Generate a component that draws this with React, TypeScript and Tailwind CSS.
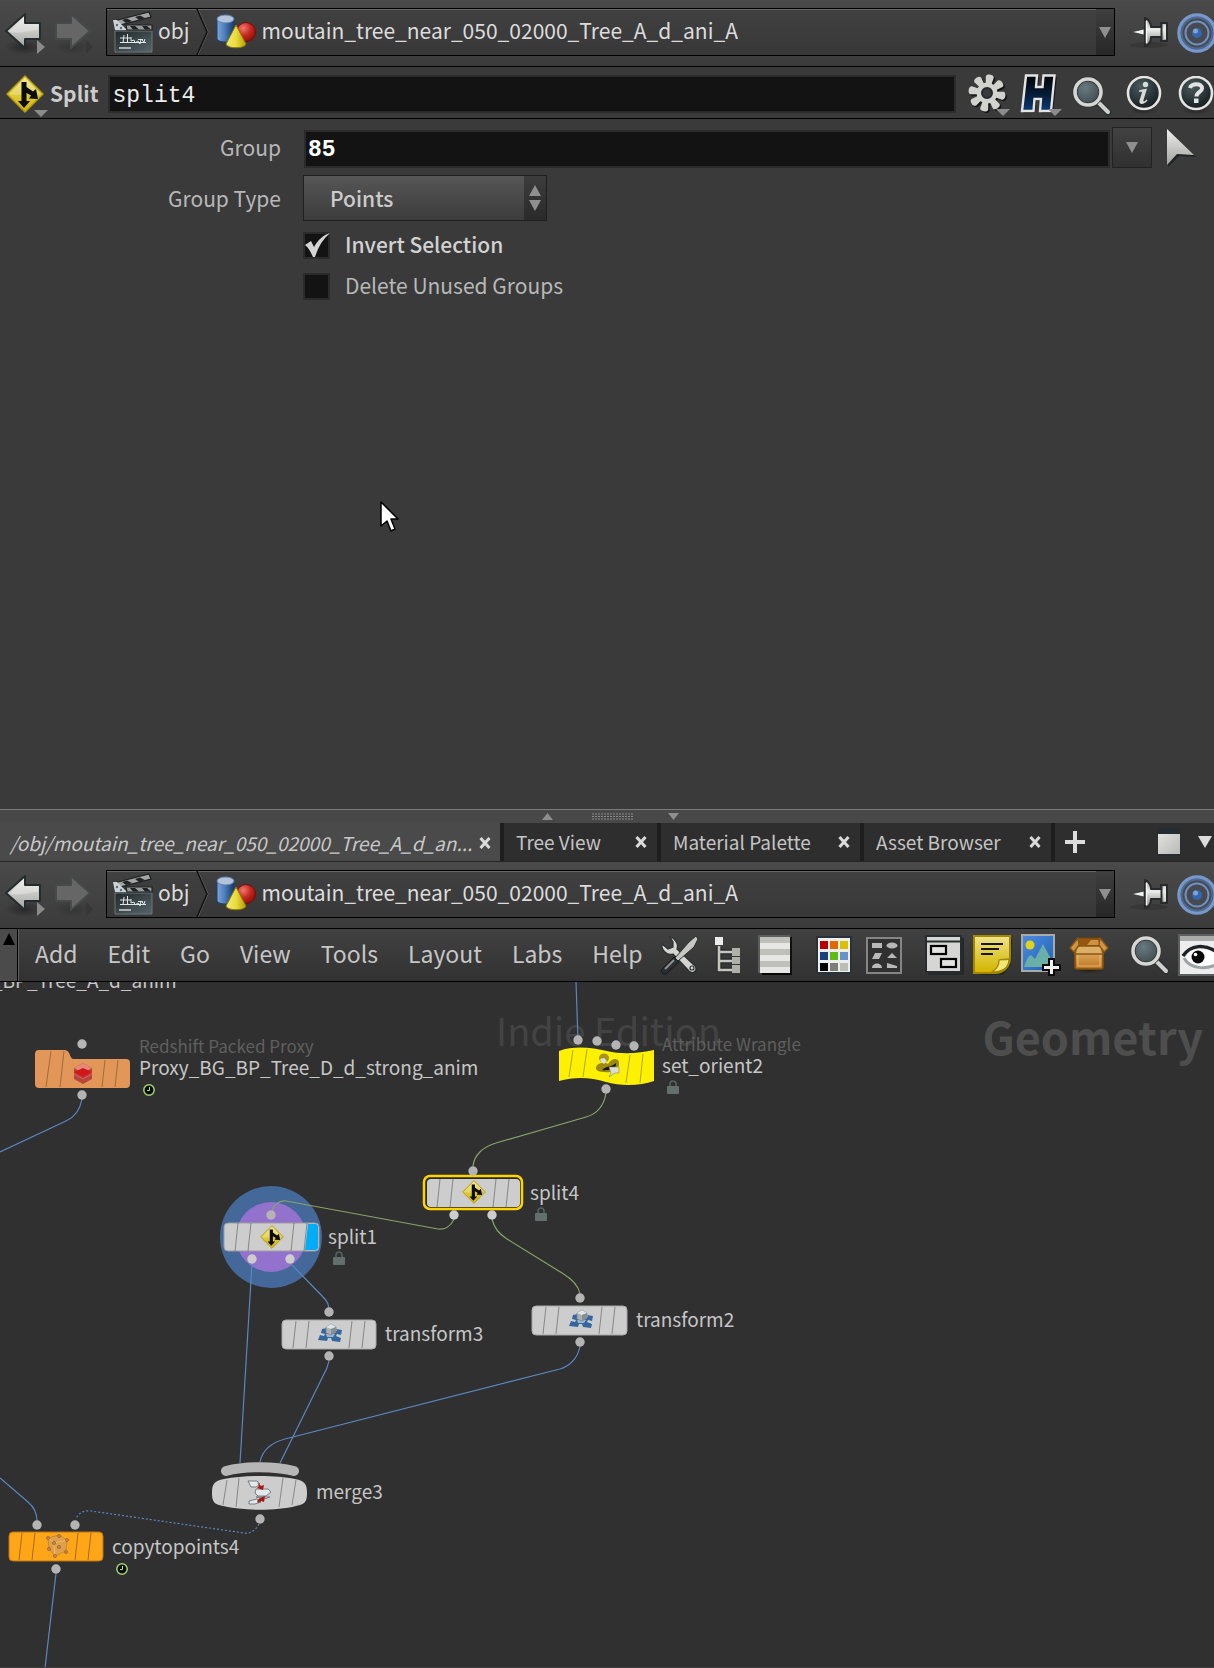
import React from "react";

const sans = "font-['Noto_Sans_CJK_SC','Open_Sans',sans-serif]";
const mono = "font-['Liberation_Mono',monospace]";

/* ---------- shared gradients ---------- */

function Gradients() {
  return (
    <svg className="absolute h-0 w-0" aria-hidden="true">
      <defs>
        <linearGradient id="silver" x1="0" y1="0" x2="0" y2="1">
          <stop offset="0" stopColor="#f0f0ee" />
          <stop offset="1" stopColor="#a2a39f" />
        </linearGradient>
        <linearGradient id="pinBody" x1="0" y1="0" x2="0" y2="1">
          <stop offset="0" stopColor="#8e908e" />
          <stop offset="0.4" stopColor="#ededeb" />
          <stop offset="1" stopColor="#7d7f7d" />
        </linearGradient>
        <linearGradient id="gold" x1="0" y1="0" x2="0" y2="1">
          <stop offset="0" stopColor="#efe48c" />
          <stop offset="0.5" stopColor="#dfcb3d" />
          <stop offset="1" stopColor="#d3b400" />
        </linearGradient>
        <linearGradient id="slate" x1="0" y1="0" x2="1" y2="1">
          <stop offset="0" stopColor="#20282b" />
          <stop offset="1" stopColor="#56656a" />
        </linearGradient>
        <linearGradient id="cyl" x1="0" y1="0" x2="1" y2="0">
          <stop offset="0" stopColor="#7ea6d6" />
          <stop offset="0.45" stopColor="#4d7ebd" />
          <stop offset="1" stopColor="#173866" />
        </linearGradient>
        <radialGradient id="redBall" cx="0.35" cy="0.3" r="0.8">
          <stop offset="0" stopColor="#ef7a6c" />
          <stop offset="0.5" stopColor="#c4281f" />
          <stop offset="1" stopColor="#8a0a06" />
        </radialGradient>
        <linearGradient id="cone" x1="0" y1="0" x2="1" y2="0">
          <stop offset="0" stopColor="#f3ea7a" />
          <stop offset="0.5" stopColor="#eadc3c" />
          <stop offset="1" stopColor="#b59f08" />
        </linearGradient>
        <linearGradient id="navy" x1="0" y1="0" x2="0" y2="1">
          <stop offset="0" stopColor="#010408" />
          <stop offset="0.5" stopColor="#051a33" />
          <stop offset="1" stopColor="#0c3a78" />
        </linearGradient>
        <radialGradient id="glass" cx="0.4" cy="0.35" r="0.8">
          <stop offset="0" stopColor="#687a80" />
          <stop offset="1" stopColor="#374246" />
        </radialGradient>
        <radialGradient id="badge" cx="0.4" cy="0.3" r="0.8">
          <stop offset="0" stopColor="#4a5a5e" />
          <stop offset="1" stopColor="#0f1618" />
        </radialGradient>
        <linearGradient id="sky" x1="0" y1="0" x2="1" y2="1">
          <stop offset="0" stopColor="#4d8be0" />
          <stop offset="1" stopColor="#1f62b4" />
        </linearGradient>
        <linearGradient id="carton" x1="0" y1="0" x2="0" y2="1">
          <stop offset="0" stopColor="#e0ac62" />
          <stop offset="1" stopColor="#b87420" />
        </linearGradient>
        <linearGradient id="window" x1="0" y1="0" x2="1" y2="1">
          <stop offset="0" stopColor="#e2e3e1" />
          <stop offset="1" stopColor="#b9bab6" />
        </linearGradient>
        <radialGradient id="shade">
          <stop offset="0" stopColor="#000" stopOpacity="0.35" />
          <stop offset="1" stopColor="#000" stopOpacity="0" />
        </radialGradient>
      </defs>
    </svg>
  );
}

/* ---------- toolbar icons ---------- */

function BackIcon() {
  return (
    <svg width="42" height="44" viewBox="0 0 42 44" aria-hidden="true">
      <ellipse cx="20" cy="35" rx="20" ry="8" fill="url(#shade)" />
      <path d="M2 19 21 2V11H36V27H21V36Z" fill="url(#silver)" stroke="#252c2e" strokeWidth="2" strokeLinejoin="round" />
      <path d="M5 20 20 5V12H34V18C24 18 20 22 5 20Z" fill="#f2f2ef" opacity="0.4" />
      <path d="M33 28 41 35 33 42Z" fill="#8b8b8b" />
    </svg>
  );
}

function ForwardIcon() {
  return (
    <svg width="40" height="44" viewBox="0 0 40 44" aria-hidden="true">
      <ellipse cx="18" cy="35" rx="18" ry="8" fill="url(#shade)" opacity="0.5" />
      <path d="M36 19 17 2V11H2V27H17V36Z" fill="#666" stroke="#464a4a" strokeWidth="2" strokeLinejoin="round" />
      <path d="M32 28 39 35 32 42Z" fill="#363636" />
    </svg>
  );
}

function ClapperIcon() {
  return (
    <svg width="40" height="42" viewBox="0 0 40 42" aria-hidden="true">
      <path d="M1 10 36 1 38 6 3 15Z" fill="#a3a6a5" stroke="#1c2021" strokeWidth="1.200" />
      <path d="M9 9 14 7.500 19 10 13 12ZM22 6 27 4.500 32 7 26 9Z" fill="#202425" />
      <path d="M2 20H39V41H2Z" fill="url(#slate)" stroke="#6c777a" strokeWidth="1" />
      <path d="M0 9H4L14 19H2Z" fill="#c9d3d8" />
      <circle cx="4" cy="14" r="1.200" fill="#5f6b70" />
      <circle cx="8" cy="17" r="1.200" fill="#5f6b70" />
      <path d="M13 14H39V19H14Z" fill="#979b9a" stroke="#1c2021" strokeWidth="1.200" />
      <path d="M17 15H22L26 18.500H20ZM29 15H34L38 18.500H32Z" fill="#1c2021" />
      <path d="M7 27H18M7 31.500H33M11 24 10 32M14.500 23V32M18 26V30L21 29 22 32 25 30 27 33 28 28 31 31 32 28M25 28.500H30" stroke="#dfe4e4" strokeWidth="1" fill="none" />
      <path d="M6 37H18" stroke="#a9aeae" strokeWidth="2" />
    </svg>
  );
}

function ShapesIcon() {
  return (
    <svg width="42" height="36" viewBox="0 0 42 36" aria-hidden="true">
      <path d="M1 5V25C2 29 17 29 18 25V5Z" fill="url(#cyl)" stroke="#1d3f72" strokeWidth="1" />
      <ellipse cx="9.500" cy="5" rx="8.500" ry="4" fill="#b3c3d8" stroke="#5d83b6" />
      <circle cx="30" cy="18" r="9.500" fill="url(#redBall)" stroke="#7b0b06" />
      <path d="M20 11 30 30C29 35 11 35 10 30Z" fill="url(#cone)" stroke="#8a7808" strokeWidth="1" strokeLinejoin="round" />
    </svg>
  );
}

function PinIcon() {
  return (
    <svg width="40" height="34" viewBox="0 0 40 34" aria-hidden="true">
      <ellipse cx="20" cy="29" rx="19" ry="3" fill="#333" opacity="0.7" />
      <path d="M2 16 15 13V19Z" fill="#f2f2f0" stroke="#2d3233" strokeWidth="0.800" />
      <path d="M16 2C20 3 22 8 22 11H32V7H38V25H32V21H22C22 25 20 29 16 30Z" fill="url(#pinBody)" stroke="#252a2b" strokeWidth="2" strokeLinejoin="round" />
      <path d="M17.500 5V27" stroke="#f6f6f4" strokeWidth="1.500" />
      <path d="M32.500 8V24" stroke="#2a2f30" strokeWidth="2" />
      <path d="M36 9V23" stroke="#e8e8e6" strokeWidth="1.500" />
    </svg>
  );
}

function TargetIcon() {
  return (
    <svg width="40" height="40" viewBox="0 0 40 40" aria-hidden="true">
      <circle cx="20" cy="20" r="18" fill="#474b50" stroke="#7698ca" strokeWidth="3.500" />
      <circle cx="20" cy="20" r="15.500" fill="none" stroke="#4d6a92" strokeWidth="2" />
      <circle cx="20" cy="20" r="11.500" fill="none" stroke="#6f90c2" strokeWidth="2" />
      <circle cx="20" cy="20" r="5" fill="#3566ae" />
      <circle cx="18.500" cy="18" r="2.500" fill="#7fa3d8" />
    </svg>
  );
}

function SplitGlyph() {
  return (
    <g>
      <path d="M19 1 37 19 19 37 1 19Z" fill="url(#gold)" stroke="#b59a10" strokeWidth="1.500" strokeLinejoin="round" />
      <path d="M3 19 19 3 35 19C24 17 14 22 3 19Z" fill="#f3eaa0" opacity="0.4" />
      <path d="M15.500 7H20.500V12L27 16.500 30 14 32 24 23 23.500 25 20.500 20.500 18V26H24L18 33 12 26H15.500Z" fill="#0b0b08" />
    </g>
  );
}

function SplitIcon() {
  return (
    <svg width="44" height="43" viewBox="0 0 44 43" aria-hidden="true">
      <SplitGlyph />
      <path d="M28 35H42L35 42Z" fill="#8b8b8b" />
    </svg>
  );
}

function GearIcon() {
  const teeth = [0, 45, 90, 135, 180, 225, 270, 315];
  const shape = (color: string) => (
    <g fill={color}>
      {teeth.map((a) => (
        <path key={a} d="M16.500 12 15 3C15 -0.500 23 -0.500 23 3L21.500 12Z" transform={`rotate(${a + 10} 19 19)`} />
      ))}
      <circle cx="19" cy="19" r="10.500" />
    </g>
  );
  return (
    <svg width="44" height="43" viewBox="0 0 44 43" aria-hidden="true">
      <g transform="translate(1.500 1.500)">{shape("#151515")}</g>
      {shape("#d2d2ce")}
      <circle cx="19" cy="19" r="5" fill="#3a3a3a" stroke="#23282a" strokeWidth="2" />
      <path d="M28 35H42L35 42Z" fill="#8b8b8b" />
    </svg>
  );
}

function HoudiniIcon() {
  return (
    <svg width="44" height="43" viewBox="0 0 44 43" aria-hidden="true">
      <path d="M8 3H19L18 13H25L26 3H37L33 39H22L23 27H16L15 39H4Z" fill="#1c1c1c" />
      <path d="M6 1.500H17L16 13H22.500L23.500 1.500H34.500L31 37H20L21 25H14.500L13.500 37H2Z" fill="url(#navy)" stroke="#e4e4e2" strokeWidth="2.400" />
      <path d="M28 35H42L35 42Z" fill="#8b8b8b" />
    </svg>
  );
}

function MagnifierIcon() {
  return (
    <svg width="40" height="40" viewBox="0 0 40 40" aria-hidden="true">
      <path d="M25 25 36 36" stroke="#2b3132" strokeWidth="7" strokeLinecap="round" />
      <path d="M25 25 36 36" stroke="#cfd0cd" strokeWidth="4" strokeLinecap="round" />
      <circle cx="16" cy="16" r="13" fill="url(#glass)" stroke="#2e3435" strokeWidth="5" />
      <circle cx="16" cy="16" r="13" fill="none" stroke="#d6d6d2" strokeWidth="3.600" />
    </svg>
  );
}

function BadgeIcon({ kind }: { kind: "info" | "help" }) {
  return (
    <svg width="38" height="40" viewBox="0 0 38 40" aria-hidden="true">
      <ellipse cx="18" cy="34" rx="15" ry="5" fill="url(#shade)" />
      <circle cx="18" cy="17" r="16" fill="url(#badge)" stroke="#e4e4e1" strokeWidth="2.600" />
      {kind === "info" ? (
        <g fill="#d9dbd9">
          <circle cx="19.500" cy="8.500" r="2.700" />
          <path d="M13 14.500C16 13.500 19 13 21 12.500L17.500 24C17 26 18.500 26 20.500 23.500L21.500 24.500C18 29 12.500 29 13.500 24.500L16 16.500C16.300 15.500 15 15.500 13 15.800Z" />
        </g>
      ) : (
        <g>
          <path d="M12 12C13 7 24 6.500 24 12.500C24 16 18.500 16 18.500 20.500" fill="none" stroke="#e4e5e3" strokeWidth="4" />
          <rect x="16" y="22.500" width="4.500" height="4.500" fill="#e4e5e3" />
        </g>
      )}
    </svg>
  );
}

function SelectArrowIcon() {
  return (
    <svg width="30" height="40" viewBox="0 0 30 40" aria-hidden="true">
      <path d="M2 3 30 29 13 28 2 39Z" fill="#1f2324" />
      <path d="M1 1 28 27 11 26 1 37Z" fill="url(#silver)" />
    </svg>
  );
}

function DownTriangle() {
  return (
    <svg width="12" height="11" viewBox="0 0 12 11" aria-hidden="true">
      <path d="M0 0H12L6 11Z" fill="#8f8f8f" />
    </svg>
  );
}

function ToolsIcon() {
  return (
    <svg width="40" height="40" viewBox="0 0 40 40" aria-hidden="true">
      <path d="M10 2C14 3 19 8 17 14L35 31C38 35 33 40 29 36L13 19C7 21 1 15 2 9L8 14 13 12V7Z" fill="#d4d4d1" stroke="#2a3031" strokeWidth="1.200" />
      <circle cx="32" cy="33" r="2" fill="#d4d4d1" stroke="#2a3031" strokeWidth="1.200" />
      <path d="M36 1 38 4 34 12 18 26 15 23 29 7Z" fill="#c6c7c2" stroke="#2a3031" strokeWidth="1" />
      <path d="M14 22 19 27 6 39C3 40 0 37 2 34Z" fill="#2a2f31" stroke="#15191a" />
      <path d="M14 25 5 34" stroke="#8c9293" strokeWidth="2" />
    </svg>
  );
}

function TreeIcon() {
  return (
    <svg width="28" height="38" viewBox="0 0 28 38" aria-hidden="true">
      <path d="M5 11V34H18M5 16H18M5 25H18" fill="none" stroke="#24292a" strokeWidth="5" />
      <path d="M5 10V34H18M5 16H18M5 25H18" fill="none" stroke="#c3c5be" strokeWidth="2.600" />
      <rect x="1" y="1" width="8" height="8" fill="#ecedeb" />
      <path d="M18 12H26V20H18ZM18 21H26V28H18ZM18 29H26V37H18Z" fill="#aeb0aa" />
    </svg>
  );
}

function ListIcon() {
  return (
    <svg width="36" height="40" viewBox="0 0 36 40" aria-hidden="true">
      <rect x="0" y="0" width="32" height="38" fill="#5b5e5e" />
      <rect x="32" y="2" width="2" height="38" fill="#111" />
      <rect x="4" y="38" width="30" height="2" fill="#080808" />
      {[0, 1, 2, 3, 4, 5].map((i) => (
        <rect key={i} x="2" y={2 + i * 6} width="30" height="6" fill={i % 2 ? "#e6e7e5" : "#bfc0ba"} />
      ))}
    </svg>
  );
}

function PaletteIcon() {
  const cells = ["#b90000", "#de6b00", "#d9c000", "#1d3f7a", "#62ba14", "#6b92c4", "#000000", "#7c7e7a", "#bcbeb6"];
  return (
    <svg width="36" height="38" viewBox="0 0 36 38" aria-hidden="true">
      <rect x="1" y="1" width="34" height="36" fill="#eeefed" stroke="#28323a" strokeWidth="2" />
      {cells.map((c, i) => (
        <rect key={c} x={4 + (i % 3) * 10} y={5 + Math.floor(i / 3) * 11} width="8" height="8" fill={c} />
      ))}
    </svg>
  );
}

function ShapeListIcon() {
  return (
    <svg width="36" height="38" viewBox="0 0 36 38" aria-hidden="true">
      <rect x="1" y="2" width="34" height="35" fill="#303030" stroke="#858585" strokeWidth="2" />
      <g fill="#b8b8b8">
        <rect x="6" y="7" width="10" height="5" />
        <ellipse cx="26" cy="9.500" rx="5.500" ry="3" />
        <path d="M9 17H16L13 23H6ZM26 17 31 22H21ZM6 32C6 26 16 26 16 32ZM21 27 31 30V32H21Z" />
      </g>
    </svg>
  );
}

function PanelsIcon() {
  return (
    <svg width="40" height="40" viewBox="0 0 40 40" aria-hidden="true">
      <rect x="3" y="3" width="36" height="37" fill="#252829" />
      <rect x="1" y="1" width="35" height="36" fill="#d6d7d5" stroke="#272d2f" strokeWidth="2" />
      <path d="M1 6.500H36" stroke="#272d2f" strokeWidth="2" />
      <rect x="6" y="11" width="15" height="8" fill="#e3e4e2" stroke="#000" strokeWidth="2.200" />
      <rect x="16" y="24" width="15" height="8" fill="#e3e4e2" stroke="#000" strokeWidth="2.200" />
    </svg>
  );
}

function NoteIcon() {
  return (
    <svg width="40" height="40" viewBox="0 0 40 40" aria-hidden="true">
      <path d="M4 4H39L38 30 30 40H6Z" fill="#272727" />
      <path d="M1 1H37V23C37 31 31 38 22 38H1Z" fill="url(#gold)" stroke="#a28802" strokeWidth="2" />
      <path d="M8 9H30M8 14H26M8 19H20" stroke="#171502" strokeWidth="2.200" />
      <path d="M36 24C31 25 28 24 26 25C26 30 24 34 19 37C30 37 36 32 36 24Z" fill="#f1e678" stroke="#a28802" strokeWidth="1.300" />
    </svg>
  );
}

function AddImageIcon() {
  return (
    <svg width="40" height="42" viewBox="0 0 40 42" aria-hidden="true">
      <rect x="1" y="1" width="32" height="36" fill="url(#sky)" stroke="#a9aaa8" strokeWidth="2" />
      <circle cx="9" cy="11" r="4.500" fill="#dfd516" />
      <path d="M3 33C5 27 7 22 10 21L14 25 22 10 30 25V33Z" fill="#6bb0a8" />
      <path d="M28 25H33V31H39V36H33V41H28V36H22V31H28Z" fill="#f0f0ef" stroke="#0b0b0b" strokeWidth="2" />
    </svg>
  );
}

function BoxIcon() {
  return (
    <svg width="40" height="38" viewBox="0 0 40 38" aria-hidden="true">
      <ellipse cx="20" cy="34" rx="18" ry="4" fill="url(#shade)" />
      <path d="M6 15H34V31Q34 33 32 33H8Q6 33 6 31Z" fill="url(#carton)" stroke="#84500a" strokeWidth="1.600" />
      <path d="M9 18H31V30H9Z" fill="none" stroke="#e3b26d" strokeWidth="1.200" />
      <path d="M9 2H31L33 10H7Z" fill="#94570e" stroke="#70440a" />
      <path d="M18 9 22 4H29L31 9Z" fill="#cf9142" />
      <path d="M8 10H32L34 18H6Z" fill="#dcae68" stroke="#8a5610" strokeWidth="1.400" strokeLinejoin="round" />
      <path d="M9 2 1 12 5 16 10 9ZM31 2 39 12 35 16 30 9Z" fill="#cf9546" stroke="#8a5610" strokeWidth="1.400" strokeLinejoin="round" />
    </svg>
  );
}

function EyeIcon() {
  return (
    <svg width="40" height="42" viewBox="0 0 40 42" aria-hidden="true">
      <rect x="1" y="1" width="44" height="40" fill="#ecedec" stroke="#5b5f60" strokeWidth="2" />
      <rect x="2" y="2" width="42" height="5" fill="#a9aba8" />
      <path d="M5 24C12 14 26 12 40 21V29C28 35 12 35 5 24Z" fill="#fff" />
      <path d="M5 22C12 11 27 9 40 19" fill="none" stroke="#1d2325" strokeWidth="3.500" />
      <path d="M6 24C12 35 28 36 40 30" fill="none" stroke="#9ea3a3" strokeWidth="3" />
      <circle cx="20" cy="23" r="6.500" fill="#0a0a0a" />
      <circle cx="17.500" cy="20.500" r="1.800" fill="#fff" />
    </svg>
  );
}

function CloseIcon() {
  return (
    <svg width="12" height="12" viewBox="0 0 12 12" aria-hidden="true">
      <path d="M1.500 1 10.500 11M10.500 1 1.500 11" stroke="#dadada" strokeWidth="3" />
    </svg>
  );
}

/* ---------- path toolbar ---------- */

function PathBar() {
  return (
    <div className="flex h-[67px] shrink-0 items-start overflow-hidden border-b border-black bg-linear-to-b from-[#4a4a4a] to-[#3b3b3b] pt-2 pl-1">
      <button type="button" aria-label="Back" className="mt-1 shrink-0"><BackIcon /></button>
      <button type="button" aria-label="Forward" className="mt-1 ml-2 shrink-0"><ForwardIcon /></button>
      <nav aria-label="Network path" className="ml-3 flex h-12 min-w-0 flex-1 items-stretch border border-black bg-linear-to-b from-[#404040] to-[#383838] shadow-[inset_0_1px_0_#666]">
        <button type="button" className="flex shrink-0 items-center gap-[5px] pl-[6px]">
          <ClapperIcon />
          <span className="pb-1 text-[21px] leading-8 text-[#dcdcdc]">obj</span>
        </button>
        <svg width="14" height="46" viewBox="0 0 14 46" className="ml-[7px] shrink-0" aria-hidden="true">
          <path d="M2 0 12 23 2 46" fill="none" stroke="#666" strokeWidth="1" />
          <path d="M1 0 11 23 1 46" fill="none" stroke="#111" strokeWidth="1.500" />
        </svg>
        <button type="button" className="flex min-w-0 flex-1 items-center gap-[3px] overflow-hidden pl-[6px]">
          <span className="shrink-0"><ShapesIcon /></span>
          <span className="truncate pb-1 text-[21px] leading-8 text-[#dcdcdc]">moutain_tree_near_050_02000_Tree_A_d_ani_A</span>
        </button>
        <button type="button" aria-label="Path history" className="flex w-[18px] shrink-0 items-center justify-center bg-linear-to-b from-[#3f3f3f] to-[#272727]">
          <DownTriangle />
        </button>
      </nav>
      <button type="button" aria-label="Pin" className="mt-2 ml-[14px] shrink-0"><PinIcon /></button>
      <button type="button" aria-label="Follow selection" className="mt-[5px] -mr-[3px] ml-2 shrink-0"><TargetIcon /></button>
    </div>
  );
}

/* ---------- parameter pane ---------- */

function NameBar() {
  return (
    <div className="flex h-[52px] shrink-0 items-start overflow-hidden border-b border-black pt-2">
      <button type="button" aria-label="Operator menu" className="ml-[6px] shrink-0"><SplitIcon /></button>
      <label htmlFor="node-name" className="shrink-0 text-[21px] leading-9 font-bold text-[#cccccc]">Split</label>
      <input
        id="node-name"
        defaultValue="split4"
        className={`${mono} ml-[10px] h-[38px] min-w-0 flex-1 border-2 border-[#2b2b2b] bg-[#131313] px-[2px] pt-[3px] text-[23px] text-[#ececec] outline-none`}
      />
      <div className="ml-3 flex shrink-0 gap-2">
        <button type="button" aria-label="Gear menu" className="-mt-px w-11"><GearIcon /></button>
        <button type="button" aria-label="Houdini menu" className="-mt-px w-11"><HoudiniIcon /></button>
        <button type="button" aria-label="Search parameters" className="w-[46px]"><MagnifierIcon /></button>
        <button type="button" aria-label="Info" className="w-11"><BadgeIcon kind="info" /></button>
        <button type="button" aria-label="Help" className="w-9 overflow-hidden"><BadgeIcon kind="help" /></button>
      </div>
    </div>
  );
}

function CheckRow({ id, label, checked, bold }: { id: string; label: string; checked?: boolean; bold?: boolean }) {
  return (
    <div className="ml-[303px] flex h-[28px] items-start">
      <span className="relative flex">
        <input
          id={id}
          type="checkbox"
          defaultChecked={checked}
          className="peer h-[27px] w-[27px] appearance-none border-2 border-[#2b2b2b] bg-[#131313]"
        />
        <svg width="25" height="25" viewBox="0 0 25 25" className="pointer-events-none absolute top-[1px] left-[2px] hidden peer-checked:block" aria-hidden="true">
          <path d="M0 12 6 8 9 14C13 7 18 2 25 0C18 6 13 14 10 24H8C6 20 4 15 0 12Z" fill="#d4d4d4" />
        </svg>
      </span>
      <label htmlFor={id} className={`ml-[15px] text-[21px] leading-6 ${bold ? "font-medium text-[#d2d2d2]" : "text-[#b8b8b8]"}`}>{label}</label>
    </div>
  );
}

function ParameterPane() {
  return (
    <section aria-label="Parameters" className="relative flex min-h-0 flex-[809] flex-col overflow-hidden bg-[#3a3a3a]">
      <PathBar />
      <NameBar />
      <div className="mt-2 flex h-[41px] items-end">
        <label htmlFor="group" className="w-[281px] shrink-0 pb-[5px] text-right text-[21px] leading-8 text-[#b8b8b8]">Group</label>
        <input
          id="group"
          defaultValue="85"
          className={`${mono} ml-[23px] h-[38px] min-w-0 flex-1 border-2 border-[#2b2b2b] bg-[#131313] px-[2px] pt-[2px] text-[23px] font-bold text-white outline-none`}
        />
        <button type="button" aria-label="Choose group" className="ml-[2px] flex h-[41px] w-10 shrink-0 items-center justify-center border border-[#222] bg-linear-to-b from-[#424242] to-[#303030]">
          <DownTriangle />
        </button>
        <button type="button" aria-label="Select in viewport" className="mr-[18px] ml-[14px] shrink-0"><SelectArrowIcon /></button>
      </div>
      <div className="mt-[7px] flex h-[46px] items-center">
        <label htmlFor="group-type" className="w-[281px] shrink-0 text-right text-[21px] leading-8 text-[#b8b8b8]">Group Type</label>
        <span className="relative ml-[22px] flex h-[46px] w-[244px]">
          <select id="group-type" defaultValue="points" className="h-full w-full appearance-none border border-[#1f1f1f] bg-linear-to-b from-[#565656] to-[#3c3c3c] pt-px pl-[26px] text-[21px] font-medium text-[#cccccc] outline-none">
            <option value="points">Points</option>
            <option value="primitives">Primitives</option>
          </select>
          <span className="pointer-events-none absolute top-px right-px bottom-px flex w-[22px] items-center justify-center bg-linear-to-b from-[#3c3c3c] to-[#2a2a2a]">
            <svg width="12" height="26" viewBox="0 0 12 26" aria-hidden="true">
              <path d="M0 11H12L6 0ZM0 15H12L6 26Z" fill="#8f8f8f" />
            </svg>
          </span>
        </span>
      </div>
      <div className="mt-[11px] flex flex-col gap-[13px]">
        <CheckRow id="invert" label="Invert Selection" checked bold />
        <CheckRow id="unused" label="Delete Unused Groups" />
      </div>
      <svg width="20" height="32" viewBox="0 0 20 32" className="pointer-events-none absolute top-[500px] left-[380px]" aria-hidden="true">
        <path d="M1 2V26L7 21 11 31 15 29 11 19H18Z" fill="#fff" stroke="#000" strokeWidth="1.500" strokeLinejoin="round" />
      </svg>
    </section>
  );
}

/* ---------- splitter and tabs ---------- */

function Splitter() {
  const dots = Array.from({ length: 14 }, (_, i) => i);
  return (
    <div className="flex h-[14px] shrink-0 items-center justify-center border-t border-[#7c7c7c] bg-[#484848] pl-[8px]">
      <svg width="138" height="7" viewBox="0 0 138 7" aria-hidden="true">
        <path d="M0 7H11L5.500 0ZM126 0H137L131.500 7Z" fill="#8d8d8d" />
        {dots.map((i) => (
          <path key={i} d={`M${50 + i * 3} 1h2M${50 + i * 3} 3.500h2M${50 + i * 3} 6h2`} stroke="#8a8a8a" strokeWidth="1" />
        ))}
      </svg>
    </div>
  );
}

const inactiveTabs = ["Tree View", "Material Palette", "Asset Browser"];
const inactiveWidths = ["w-[157px]", "w-[203px]", "w-[191px]"];

function Tabs() {
  return (
    <div className="flex h-[39px] shrink-0 overflow-hidden border-b border-[#262626] bg-[#2e2e2e]">
      <div className="-mb-px flex w-[500px] items-center bg-[#4a4a4a] pl-[10px]">
        <button type="button" className="shrink-0 text-[19px] leading-8 whitespace-nowrap text-[#c8c8c8] italic">/obj/moutain_tree_near_050_02000_Tree_A_d_an...</button>
        <button type="button" aria-label="Close tab" className="mr-[9px] ml-auto shrink-0"><CloseIcon /></button>
      </div>
      {inactiveTabs.map((t, i) => (
        <div key={t} className={`flex shrink-0 items-center border-l-4 border-[#1e1e1e] pl-3 ${inactiveWidths[i]}`}>
          <button type="button" className="text-[19px] leading-8 text-[#c4c4c4]">{t}</button>
          <button type="button" aria-label={`Close ${t}`} className="mr-[10px] ml-auto shrink-0"><CloseIcon /></button>
        </div>
      ))}
      <div className="flex min-w-0 flex-1 items-center border-l-4 border-[#1e1e1e] pr-[2px] pl-[10px]">
        <button type="button" aria-label="New tab" className="shrink-0">
          <svg width="20" height="22" viewBox="0 0 20 22" aria-hidden="true"><path d="M10 0V22M0 11H20" stroke="#dcdcdc" strokeWidth="4" /></svg>
        </button>
        <button type="button" aria-label="Maximize pane" className="ml-auto shrink-0">
          <svg width="24" height="28" viewBox="0 0 24 28" aria-hidden="true">
            <rect width="24" height="28" fill="#262d30" />
            <rect x="1" y="6" width="22" height="20" fill="url(#window)" />
          </svg>
        </button>
        <button type="button" aria-label="Pane menu" className="ml-[17px] shrink-0">
          <svg width="14" height="12" viewBox="0 0 14 12" aria-hidden="true"><path d="M0 0H14L7 12Z" fill="#dcdcdc" /></svg>
        </button>
      </div>
    </div>
  );
}

/* ---------- menu bar ---------- */

const menus = ["Add", "Edit", "Go", "View", "Tools", "Layout", "Labs", "Help"];

function MenuBar() {
  return (
    <div className="flex h-[53px] shrink-0 overflow-hidden border-b border-black bg-linear-to-b from-[#414141] to-[#323232]">
      <button type="button" aria-label="Collapse toolbar" className="flex w-[18px] shrink-0 justify-center border-r border-black bg-[#4b4b4b] pt-1">
        <svg width="12" height="12" viewBox="0 0 12 12" aria-hidden="true"><path d="M0 12H12L6 0Z" fill="#000" /></svg>
      </button>
      <div className="flex flex-1 items-center border-l border-[#606060]">
        <div role="menubar" className="ml-4 flex shrink-0 gap-[30px]">
          {menus.map((m) => (
            <button key={m} type="button" role="menuitem" className="pb-1 text-[23px] leading-8 text-[#c6c6c6]">{m}</button>
          ))}
        </div>
        <div className="ml-[17px] flex shrink-0 items-center">
          <button type="button" aria-label="Tools"><ToolsIcon /></button>
          <button type="button" aria-label="Tree" className="ml-[14px]"><TreeIcon /></button>
          <button type="button" aria-label="List" className="ml-4"><ListIcon /></button>
          <button type="button" aria-label="Color palette" className="ml-[22px]"><PaletteIcon /></button>
          <button type="button" aria-label="Shape palette" className="ml-[14px]"><ShapeListIcon /></button>
          <button type="button" aria-label="Network box" className="ml-[23px]"><PanelsIcon /></button>
          <button type="button" aria-label="Sticky note" className="ml-2"><NoteIcon /></button>
          <button type="button" aria-label="Background image" className="ml-2"><AddImageIcon /></button>
          <button type="button" aria-label="Gather" className="ml-2"><BoxIcon /></button>
          <button type="button" aria-label="Find" className="ml-[21px]"><MagnifierIcon /></button>
          <button type="button" aria-label="Visibility" className="ml-2"><EyeIcon /></button>
        </div>
      </div>
    </div>
  );
}

/* ---------- network canvas ---------- */

const view = { x: 0, y: 982 };

type Wire = { d: string; kind: "blue" | "green" | "dotted" };

const wires: Wire[] = [
  { kind: "blue", d: "M82 1099C80 1110 75 1117 66 1121L0 1152" },
  { kind: "blue", d: "M576 982 578 1040" },
  { kind: "green", d: "M606 1093C604 1105 597 1114 586 1117L496 1143C482 1147 474 1156 473 1166" },
  { kind: "green", d: "M454 1219C451 1226 445 1230 438 1229L286 1201C279 1200 273 1205 272 1212" },
  { kind: "green", d: "M492 1219C494 1228 499 1234 507 1239L562 1273C572 1279 579 1287 580 1294" },
  { kind: "blue", d: "M580 1346C578 1358 570 1366 560 1369L285 1439C270 1443 262 1452 260 1462" },
  { kind: "blue", d: "M252 1263 240 1463" },
  { kind: "blue", d: "M291 1264 324 1298C327 1301 329 1305 329 1310" },
  { kind: "blue", d: "M329 1361C328 1366 326 1371 323 1376L280 1463" },
  { kind: "blue", d: "M0 1478 28 1502C34 1507 37 1514 37 1521" },
  { kind: "dotted", d: "M259 1524C256 1530 251 1534 244 1533L91 1511C84 1510 78 1513 76 1519" },
  { kind: "blue", d: "M56 1573 45 1668" },
];

const wireColor = { blue: "#5a87c0", green: "#87a368", dotted: "#5a87c0" };

function Port({ x, y, light }: { x: number; y: number; light?: boolean }) {
  return <circle cx={x} cy={y} r="4.700" fill={light ? "#cdcdcd" : "#b4b4b4"} />;
}

function Stripes({ x, y, h = 28 }: { x: number; y: number; h?: number }) {
  return (
    <g stroke="#000" strokeOpacity="0.35" strokeWidth="1">
      {[11, 24, 67, 80].map((dx) => (
        <path key={dx} d={`M${x + dx + 3} ${y}L${x + dx} ${y + h}`} />
      ))}
    </g>
  );
}

function TransformGlyph({ x, y }: { x: number; y: number }) {
  return (
    <g transform={`translate(${x} ${y})`}>
      <path d="M4 5 9 4V7H19L18 5 24 6 23 11 19 10 18 12 23 14 22 18 14 17 13 14 10 14 9 17 0 16 2 11 6 12 7 10 3 9Z" fill="#36669f" />
      <path d="M8 10 17 10 15 13H9Z" fill="#9fb4cc" />
      <path d="M8 3 13 0 18 3V8L13 11 8 9Z" fill="#abb2b5" stroke="#788287" strokeWidth="0.700" />
      <path d="M8 3 13 0 18 3 13 5Z" fill="#dfe5e8" />
      <path d="M13 5 18 3V8L13 11Z" fill="#858f94" />
    </g>
  );
}

function NodeShapes() {
  return (
    <g>
      {/* display ring behind split1 */}
      <circle cx="271" cy="1237" r="51" fill="#446899" />
      <circle cx="271" cy="1237" r="35" fill="#9272cc" />
      <g fill="none">
        {wires.map((w) => (
          <path key={w.d} d={w.d} stroke={wireColor[w.kind]} strokeWidth="1.200" strokeDasharray={w.kind === "dotted" ? "2 2" : undefined} />
        ))}
      </g>

      {/* redshift proxy */}
      <path d="M39 1050H65C70 1050 70 1059 73 1059H126Q130 1059 130 1063V1084Q130 1088 126 1088H39Q35 1088 35 1084V1054Q35 1050 39 1050Z" fill="#e29758" />
      <g stroke="#a06c3c" strokeWidth="1"><path d="M51 1051 46 1087M64 1051 60 1087M105 1060 102 1087M118 1060 115 1087" /></g>
      <path d="M83 1063 92 1068V1079L83 1084 74 1079V1068Z" fill="#b8453b" />
      <path d="M83 1063 92 1068 83 1073 74 1068Z" fill="#e48a76" />
      <path d="M83 1068 92 1072 83 1077 74 1072Z" fill="#d5151b" />
      <path d="M74 1074 83 1079 92 1074" fill="none" stroke="#dc5f58" strokeWidth="1" />
      <Port x={82} y={1044} /><Port x={82} y={1095} />

      {/* attribute wrangle */}
      <path d="M559 1051C575 1045 593 1048 607 1051C623 1055 640 1053 654 1050V1081C640 1086 620 1086 606 1082C590 1077 574 1077 559 1081Z" fill="#fdf003" />
      <g stroke="#b0a700" strokeWidth="1"><path d="M573 1050 569 1077M587 1049 583 1077M630 1055 626 1083M643 1054 640 1083" /></g>
      <ellipse cx="604" cy="1058" rx="5" ry="4.500" fill="#a59322" />
      <path d="M596 1067C598 1062 605 1062 608 1064C613 1056 620 1059 619 1064C619 1071 610 1073 604 1072C600 1072 595 1071 596 1067Z" fill="#9c8911" />
      <path d="M600 1059 604 1058 607 1061 604 1064 601 1062Z" fill="#dedfd8" />
      <path d="M602 1070C606 1066 612 1067 616 1063C617 1068 610 1071 602 1070Z" fill="#151303" />
      <path d="M609 1067H619V1073L615 1073 609 1077 611 1073Z" fill="#dbdcd4" stroke="#8b8b62" strokeWidth="0.600" />
      <Port x={578} y={1040} /><Port x={597} y={1041} /><Port x={616} y={1045} /><Port x={634} y={1046} />
      <Port x={606} y={1089} />

      {/* split4 */}
      <rect x="424" y="1176" width="98" height="33" rx="6" fill="#2a2a20" stroke="#fed300" strokeWidth="2.500" />
      <rect x="427" y="1179" width="93" height="28" rx="4" fill="#cdcdcd" />
      <Stripes x={426} y={1179} />
      <g transform="translate(462 1180) scale(0.63)"><SplitGlyph /></g>
      <Port x={473} y={1171} /><Port x={454} y={1215} light /><Port x={492} y={1215} light />

      {/* split1 */}
      <rect x="224" y="1223" width="95" height="28" rx="4" fill="#cdcdcd" stroke="#9e9ea0" strokeWidth="1" />
      <path d="M308 1224H315Q318 1224 318 1227V1247Q318 1250 315 1250H305Z" fill="#02adf7" />
      <Stripes x={224} y={1223} />
      <g transform="translate(260 1225) scale(0.63)"><SplitGlyph /></g>
      <Port x={271} y={1215} /><Port x={252} y={1259} light /><Port x={290} y={1259} light />

      {/* transform3 */}
      <rect x="282" y="1320" width="94" height="29" rx="4" fill="#cdcdcd" stroke="#a8a8a8" strokeWidth="1" />
      <Stripes x={282} y={1321} h={27} />
      <TransformGlyph x={318} y={1324} />
      <Port x={329} y={1312} /><Port x={329} y={1356} />

      {/* transform2 */}
      <rect x="532" y="1306" width="95" height="29" rx="4" fill="#cdcdcd" stroke="#a8a8a8" strokeWidth="1" />
      <Stripes x={532} y={1307} h={27} />
      <TransformGlyph x={569} y={1310} />
      <Port x={580} y={1298} /><Port x={580} y={1342} />

      {/* merge3 */}
      <path d="M226 1471C245 1466 275 1466 294 1471" fill="none" stroke="#b6b6b6" strokeWidth="10" strokeLinecap="round" />
      <path d="M212 1493C212 1484 214 1481 224 1479C244 1475 276 1475 295 1479C305 1481 307 1484 307 1493C307 1502 305 1504 296 1506C276 1511 244 1511 223 1506C214 1504 212 1502 212 1493Z" fill="#cdcdcd" />
      <g stroke="#888" strokeWidth="1"><path d="M227 1480 223 1505M239 1478 236 1507M283 1478 279 1507M296 1480 292 1505" /></g>
      <path d="M248 1481H257L260 1484 256 1487H251ZM256 1489H268L271 1492 266 1496H258L255 1493ZM249 1501 257 1499 261 1502 255 1504H249ZM256 1497H270L264 1499Z" fill="#e5e9ed" stroke="#68747d" strokeWidth="0.900" />
      <path d="M257 1482 261 1486 264 1485 263 1490 257 1488 259 1486ZM257 1501 260 1498 265 1496 264 1502 261 1501 258 1503Z" fill="#a71812" />
      <Port x={260} y={1519} />

      {/* copytopoints4 */}
      <rect x="9" y="1532" width="94" height="29" rx="4" fill="#ffa518" stroke="#b87410" strokeWidth="1" />
      <Stripes x={8} y={1533} h={27} />
      <path d="M48 1538 59 1535 67 1540 66 1551 55 1556 49 1549Z" fill="#e0a04a" stroke="#c58a3c" strokeWidth="1" />
      <path d="M48 1538 54 1543 67 1540M54 1543 55 1556" fill="none" stroke="#f0bb68" strokeWidth="1" />
      <g fill="#c98546" stroke="#7c5128" strokeWidth="0.500">
        {[[48, 1538], [59, 1536], [67, 1540], [54, 1543], [59, 1547], [49, 1549], [66, 1552], [55, 1556]].map(([x, y]) => (
          <circle key={`${x}-${y}`} cx={x} cy={y} r="1.600" />
        ))}
      </g>
      <Port x={37} y={1525} /><Port x={75} y={1525} /><Port x={56} y={1569} />
    </g>
  );
}

function LockIcon() {
  return (
    <svg width="12" height="14" viewBox="0 0 12 14" className="mt-[3px] ml-[5px]" aria-label="Locked">
      <path d="M3 7V4C3 0 9 0 9 4V7" fill="none" stroke="#56625f" strokeWidth="1.600" />
      <rect y="6" width="12" height="8" rx="1" fill="#62706d" />
    </svg>
  );
}

function ClockIcon() {
  return (
    <svg width="12" height="12" viewBox="0 0 12 12" className="mt-[5px] ml-1" aria-label="Time dependent">
      <circle cx="6" cy="6" r="5.200" fill="#0a0d06" stroke="#a2d273" strokeWidth="1.500" />
      <path d="M6.500 3V6.500H4" fill="none" stroke="#b5dc90" strokeWidth="1" />
    </svg>
  );
}

type NodeLabel = { name: string; type?: string; x: number; base: number; flag?: "lock" | "clock" };

const labels: NodeLabel[] = [
  { name: "Proxy_BG_BP_Tree_A_d_anim", x: -94, base: 988 },
  { name: "Proxy_BG_BP_Tree_D_d_strong_anim", type: "Redshift Packed Proxy", x: 139, base: 1075, flag: "clock" },
  { name: "set_orient2", type: "Attribute Wrangle", x: 662, base: 1073, flag: "lock" },
  { name: "split4", x: 530, base: 1200, flag: "lock" },
  { name: "split1", x: 328, base: 1244, flag: "lock" },
  { name: "transform3", x: 385, base: 1341 },
  { name: "transform2", x: 636, base: 1327 },
  { name: "merge3", x: 316, base: 1499 },
  { name: "copytopoints4", x: 112, base: 1554, flag: "clock" },
];

function NetworkCanvas() {
  return (
    <div className="relative min-h-0 flex-1 overflow-hidden border-b border-[#3e3e3e] bg-[#303030]">
      <div className="absolute top-[18px] left-[496px] text-[38px] leading-[60px] text-[#434343]">Indie Edition</div>
      <div className="absolute top-[24px] right-[11px] text-[45px] leading-[60px] font-bold text-[#4e4e4e]">Geometry</div>
      <svg width="100%" height="100%" className="absolute inset-0" role="img" aria-label="Node network">
        <g transform={`translate(${-view.x} ${-view.y})`}><NodeShapes /></g>
      </svg>
      {labels.map((l) => (
        <div
          key={l.name}
          className="absolute flex flex-col whitespace-nowrap"
          style={{ left: l.x - view.x, top: l.base - view.y - (l.type ? 38 : 20) }}
        >
          {l.type && <span className="text-[17px] leading-[18px] text-[#5f5f5f]">{l.type}</span>}
          <span className="text-[19px] leading-6 text-[#c6c6c6]">{l.name}</span>
          {l.flag === "lock" && <LockIcon />}
          {l.flag === "clock" && <ClockIcon />}
        </div>
      ))}
    </div>
  );
}

export default function App() {
  return (
    <main className={`${sans} flex h-screen flex-col overflow-hidden bg-[#3a3a3a]`}>
      <Gradients />
      <ParameterPane />
      <section aria-label="Network editor" className="flex min-h-0 flex-[859] flex-col">
        <Splitter />
        <Tabs />
        <PathBar />
        <MenuBar />
        <NetworkCanvas />
      </section>
    </main>
  );
}
